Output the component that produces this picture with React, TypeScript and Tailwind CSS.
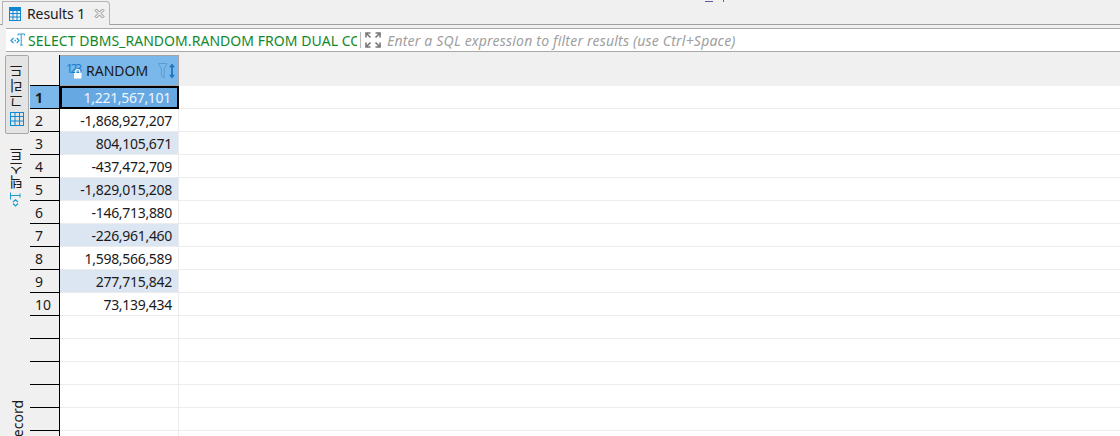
const rows = [
  '1,221,567,101',
  '-1,868,927,207',
  '804,105,671',
  '-437,472,709',
  '-1,829,015,208',
  '-146,713,880',
  '-226,961,460',
  '1,598,566,589',
  '277,715,842',
  '73,139,434',
  '',
  '',
  '',
  '',
  '',
  '',
]

function TabTableIcon() {
  return (
    <svg className="w-[12px] h-[14px] shrink-0" viewBox="0 0 12 14" fill="none" stroke="#0f86d2" strokeWidth="1">
      <rect x="0.5" y="0.5" width="11" height="13" />
      <rect x="0.5" y="0.5" width="11" height="3" fill="#0f86d2" />
      <path d="M0.5 6.5h11M0.5 10h11M4 0.5v13M8 0.5v13" />
    </svg>
  )
}

function GridIcon() {
  return (
    <svg className="mt-[4px] w-[14px] h-[14px] shrink-0" viewBox="0 0 14 14" fill="none" stroke="#0f8ad6" strokeWidth="1">
      <rect x="0.5" y="0.5" width="13" height="13" />
      <path d="M0.5 4.5h13M0.5 9h13M5 0.5v13M9.5 0.5v13" />
    </svg>
  )
}

function CodeIcon() {
  return (
    <svg className="w-[15px] h-[14px] shrink-0" viewBox="0 0 15 14" fill="none" strokeWidth="1.2">
      <path d="M3.5 5L1 7.5L3.5 10" stroke="#1a9ad6" />
      <path d="M4.5 6.8h1.4v1.4h-1.4z" fill="#1a9ad6" stroke="none" />
      <path d="M6.8 5L9 7.5L6.8 10" stroke="#1a9ad6" />
      <path d="M8 1h6.5M8 1v1.5M14.5 1v1.5M11.2 1v11M9.8 12h3" stroke="#2f97cf" strokeWidth="1" />
    </svg>
  )
}

function ExpandIcon() {
  return (
    <svg className="w-[16px] h-[16px] shrink-0" viewBox="0 0 16 16" fill="none" stroke="#777777" strokeWidth="1.6">
      <path d="M1 5.5V1h4.5M1 1l4.5 4.5M15 5.5V1h-4.5M15 1l-4.5 4.5M1 10.5V15h4.5M1 15l4.5-4.5M15 10.5V15h-4.5M15 15l-4.5-4.5" />
    </svg>
  )
}

function HeaderTypeIcon() {
  return (
    <svg className="w-[22px] h-[22px] shrink-0" viewBox="0 0 22 22" fill="none">
      <text x="3" y="12.5" fontSize="12" textLength="16" fill="#1c7ccc" fontFamily="Noto Sans, sans-serif">123</text>
      <rect x="11" y="13" width="7.5" height="5.5" fill="#fff" />
      <path d="M12.8 13v-1.5a2 2 0 0 1 4 0V13" stroke="#fff" strokeWidth="1.2" />
    </svg>
  )
}

function FilterSortIcon() {
  return (
    <svg className="w-[18px] h-[16px] shrink-0" viewBox="0 0 18 16" fill="none">
      <path d="M0.5 0.5h8.5L6.2 6v9L3.4 12.5V6z" stroke="#5b9ed6" strokeWidth="1" />
      <path d="M14 0.5l3 3.7h-6zM14 15.5l-3-3.7h6z" fill="#1c78bd" />
      <path d="M14 4v8" stroke="#1c78bd" strokeWidth="1.8" />
    </svg>
  )
}

function TextTabIcon() {
  return (
    <svg className="mt-[3px] w-[16px] h-[15px] shrink-0" viewBox="0 0 16 15" fill="none" stroke="#1a9ad6" strokeWidth="1">
      <path d="M1.5 0.5v7M1.5 3.5h9.5M11 1.5v4" />
      <path d="M4 10l2.5-2.2L9 10M4 11.5l2.5 2.5L9 11.5" strokeWidth="1.2" />
    </svg>
  )
}

export default function App() {
  return (
    <div className="relative w-[1120px] h-[436px] overflow-hidden bg-[#f0f0f0] text-[14px] text-[#1a1a1a] font-['Noto_Sans','Noto_Sans_CJK_KR',sans-serif]">
      {/* stray bit of the window above */}
      <div className="absolute left-[705px] top-0 w-[8px] h-[2px] border-b border-[#5c5ca8]" />
      <div className="absolute left-[723px] top-0 w-px h-[2px] bg-[#5c5ca8]" />

      {/* Tab strip */}
      <div className="h-[25px] pl-[2px] border-b border-[#a0a0a0] flex items-end">
        <div className="relative top-[1px] w-[108px] h-[24px] pl-[6px] bg-[#f0f0f0] border border-b-0 border-[#b4b4b4] rounded-tr-[4px] flex items-center">
          <TabTableIcon />
          <span className="ml-[6px] leading-none tracking-[-0.1px]">Results 1</span>
          <svg className="ml-[9px] w-[11px] h-[11px]" viewBox="0 0 11 11" fill="none" stroke="#8c8c8c" strokeWidth="1">
            <path d="M1 2.5L2.5 1L5.5 4L8.5 1L10 2.5L7 5.5L10 8.5L8.5 10L5.5 7L2.5 10L1 8.5L4 5.5z" />
          </svg>
        </div>
      </div>

      {/* SQL filter bar */}
      <div className="ml-[6px] mt-[3px] h-[24px] bg-white border-y border-[#a8a8a8] flex items-center">
        <div className="ml-[4px] w-[347px] flex items-center overflow-hidden whitespace-nowrap">
          <CodeIcon />
          <span className="ml-[3px] tracking-[0.05px] text-[#12882c]">SELECT DBMS_RANDOM.RANDOM FROM DUAL COUNT</span>
        </div>
        <div className="ml-[3px] w-px h-[16px] bg-[#b8b8b8]" />
        <div className="ml-[4px]">
          <ExpandIcon />
        </div>
        <span className="ml-[6px] italic tracking-[0.2px] text-[#a0a0a0]">Enter a SQL expression to filter results (use Ctrl+Space)</span>
      </div>

      <div className="mt-[3px] flex">
        {/* Vertical presentation tabs */}
        <div className="ml-[5px] w-[24px] flex flex-col items-center">
          <div className="w-[24px] h-[79px] shrink-0 bg-[#e4e4e4] border border-[#a8a8a8] rounded-[2px] flex flex-col items-center justify-end pb-[7px]">
            <span className="[writing-mode:vertical-rl] rotate-180 leading-none tracking-[1px]">그리드</span>
            <GridIcon />
          </div>
          <div className="mt-[13px] flex flex-col items-center shrink-0">
            <span className="[writing-mode:vertical-rl] rotate-180 leading-none">텍스트</span>
            <TextTabIcon />
          </div>
          <span className="mt-[193px] ml-px shrink-0 [writing-mode:vertical-rl] rotate-180 leading-none">Record</span>
        </div>

        {/* Result grid */}
        <div className="ml-px flex-1 min-w-0">
          <div className="h-[31px] flex">
            <div className="w-[30px] border-r border-b border-black" />
            <div className="w-[119px] bg-[#7ab7ea] border-y border-r border-[#a4a4a4] pl-[3px] pr-[2px] flex items-center">
              <HeaderTypeIcon />
              <span className="ml-px">RANDOM</span>
              <div className="ml-auto">
                <FilterSortIcon />
              </div>
            </div>
          </div>
          {rows.map((value, index) => (
            <div key={index} className="h-[23px] flex">
              <div
                className={`w-[30px] shrink-0 border-r border-b border-black pl-[5px] flex items-center ${
                  index === 0 ? 'bg-[#7ab7ea] font-bold' : ''
                }`}
              >
                {value ? index + 1 : ''}
              </div>
              <div
                className={`w-[119px] shrink-0 pr-[6px] flex items-center justify-end tracking-[-0.3px] ${
                  index === 0
                    ? 'bg-[#66a8e2] border-2 border-black text-[#eef6fd]'
                    : `border-r border-b border-[#ececec] ${value && index % 2 === 0 ? 'bg-[#dce6f2]' : 'bg-white'}`
                }`}
              >
                {value}
              </div>
              <div className="flex-1 bg-white border-b border-[#ececec]" />
            </div>
          ))}
        </div>
      </div>
    </div>
  )
}
